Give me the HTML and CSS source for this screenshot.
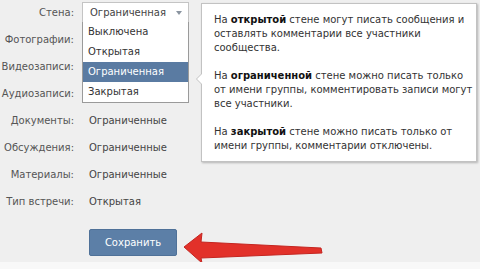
FILE: index.html
```html
<!DOCTYPE html>
<html lang="ru">
<head>
  <meta charset="UTF-8">
  <title>Настройки сообщества</title>
  <link rel="stylesheet" href="styles.css">
</head>
<body>
  <div class="settings">
    <div class="row">
      <div class="label">Стена:</div>
      <div class="value">
        <div class="select">
          <span>Ограниченная</span>
          <span class="select-arrow"></span>
        </div>
        <ul class="dropdown">
          <li>Выключена</li>
          <li>Открытая</li>
          <li class="active">Ограниченная</li>
          <li>Закрытая</li>
        </ul>
      </div>
    </div>
    <div class="row"><div class="label">Фотографии:</div><div class="value"></div></div>
    <div class="row"><div class="label">Видеозаписи:</div><div class="value"></div></div>
    <div class="row"><div class="label">Аудиозаписи:</div><div class="value"></div></div>
    <div class="row"><div class="label">Документы:</div><div class="value">Ограниченные</div></div>
    <div class="row"><div class="label">Обсуждения:</div><div class="value">Ограниченные</div></div>
    <div class="row"><div class="label">Материалы:</div><div class="value">Ограниченные</div></div>
    <div class="row"><div class="label">Тип встречи:</div><div class="value">Открытая</div></div>

    <div class="actions">
      <button class="save-button" type="button">Сохранить</button>
      <svg class="red-arrow" width="142" height="34" viewBox="0 0 142 34">
        <polygon points="1,15 19,1 18,10 138,16 139,21 18,26 19,31" fill="#e2312a" stroke="#c42520" stroke-width="1" stroke-linejoin="round"/>
      </svg>
    </div>
  </div>

  <div class="tooltip">
    <p>На <b>открытой</b> стене могут писать сообщения и<br>оставлять комментарии все участники<br>сообщества.</p>
    <p>На <b>ограниченной</b> стене можно писать только<br>от имени группы, комментировать записи могут<br>все участники.</p>
    <p>На <b>закрытой</b> стене можно писать только от<br>имени группы, комментарии отключены.</p>
  </div>

  <div class="footer-strip"></div>
</body>
</html>
```

FILE: styles.css
```css
body {
  margin: 0;
  background-color: #efefef;
  font-family: 'DejaVu Sans', 'Liberation Sans', sans-serif;
  font-size: 10px;
  color: #333;
  height: 269px;
  overflow: hidden;
  position: relative;
}

.settings {
  margin-top: -1px;
}

.row {
  display: flex;
  align-items: center;
  height: 27px;
}

.label {
  width: 74px;
  text-align: right;
  color: #555;
}

.value {
  margin-left: 15px;
  position: relative;
  color: #444;
}

.select {
  position: relative;
  left: -7px;
  width: 98px;
  height: 19px;
  padding-left: 7px;
  background-color: #fff;
  border: 1px solid #c4c4c4;
  display: flex;
  align-items: center;
  justify-content: space-between;
}

.select-arrow {
  width: 0;
  height: 0;
  margin-right: 6px;
  border-left: 3px solid transparent;
  border-right: 3px solid transparent;
  border-top: 4px solid #8a94a0;
}

.dropdown {
  position: absolute;
  top: 20px;
  left: -7px;
  width: 105px;
  margin: 0;
  padding: 0;
  list-style: none;
  background-color: #fff;
  border: 1px solid #9a9a9a;
  border-top: none;
  z-index: 2;
}

.dropdown li {
  height: 20px;
  line-height: 20px;
  padding-left: 5px;
  color: #333;
}

.dropdown li.active {
  background-color: #5a7ba2;
  color: #fff;
}

.actions {
  display: flex;
  align-items: flex-start;
  margin-top: 14px;
  margin-left: 89px;
}

.save-button {
  width: 88px;
  height: 27px;
  background-color: #5c7fa7;
  border: 1px solid #4f7198;
  border-radius: 2px;
  color: #fff;
  font-family: 'DejaVu Sans', 'Liberation Sans', sans-serif;
  font-size: 10px;
  padding: 0;
}

.red-arrow {
  margin-left: 6px;
  margin-top: 3px;
}

.tooltip {
  position: absolute;
  top: 3px;
  left: 201px;
  width: 256px;
  height: 140px;
  padding: 9px 6px 8px 12px;
  background-color: #fff;
  border: 1px solid #c2c2c2;
  box-shadow: 1px 1px 2px rgba(0, 0, 0, 0.25);
  line-height: 14px;
  color: #333;
  white-space: nowrap;
}

.tooltip p {
  margin: 0 0 14px 0;
}

.tooltip b {
  color: #111;
}

.tooltip::before,
.tooltip::after {
  content: "";
  position: absolute;
  left: -6px;
  top: 69px;
  border-top: 6px solid transparent;
  border-bottom: 6px solid transparent;
  border-right: 6px solid #c2c2c2;
}

.tooltip::after {
  left: -5px;
  border-right-color: #fff;
}

.footer-strip {
  position: absolute;
  left: 0;
  right: 0;
  bottom: 0;
  height: 7px;
  background-color: #f8f8f8;
}
```
